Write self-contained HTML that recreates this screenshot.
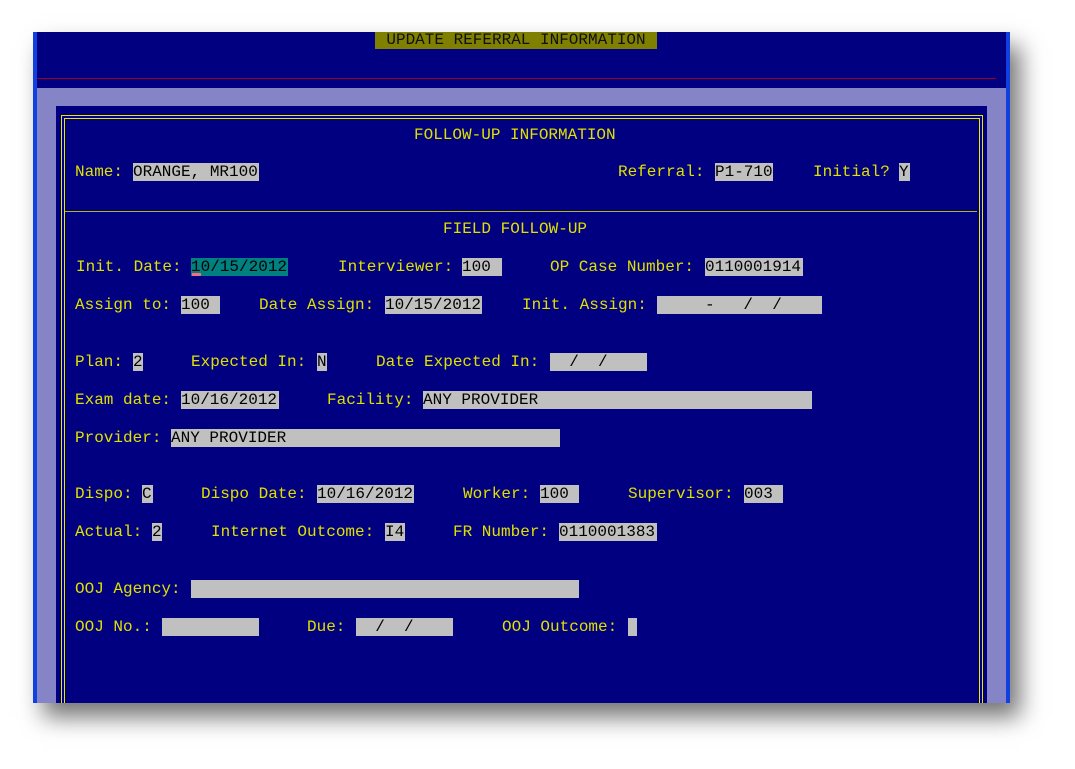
<!DOCTYPE html>
<html><head><meta charset="utf-8"><style>
body{margin:0;width:1075px;height:769px;background:#fff;position:relative;overflow:hidden;font-family:"Liberation Mono",monospace;font-size:16px;}
#win{position:absolute;left:33px;top:32px;width:977px;height:671px;background:#000080;box-shadow:10px 14px 22px rgba(0,0,0,0.55);overflow:hidden}
.abs{position:absolute}
.t{position:absolute;color:#e0e000;line-height:18px;white-space:pre;height:18px}
.f{position:absolute;background:#c0c0c0;color:#000;line-height:18px;height:18px;white-space:pre}
.stip{background:#8484c6}
</style></head><body>
<div id="win">
 <div class="abs" style="left:0;top:0;width:4px;height:671px;background:#1040e0"></div>
 <div class="abs" style="right:0;top:0;width:4px;height:671px;background:#1040e0"></div>
 <div class="abs" style="left:4px;top:46px;width:959px;height:1px;background:#a00020"></div>
 <div class="abs stip" style="left:4px;top:56px;width:969px;height:615px"></div>
 <div class="abs" style="left:23px;top:74px;width:931px;height:600px;background:#000080"></div>
 <div class="abs" style="left:28px;top:83px;width:920px;height:600px;border:1px solid #e8e800"></div>
 <div class="abs" style="left:31px;top:86px;width:914px;height:600px;border:1px solid #e8e800"></div>
 <div class="abs" style="left:32px;top:179px;width:912px;height:1px;background:#b8b800"></div>
 <div class="abs" style="left:342px;top:0;width:282px;height:17px;background:#808000;color:#101010;line-height:17px;text-align:center;white-space:pre">UPDATE REFERRAL INFORMATION</div>
</div>
<div class="t" style="left:414px;top:126px">FOLLOW-UP INFORMATION</div>
<div class="t" style="left:75px;top:163px">Name:</div><div class="f" style="left:133px;top:163px;width:126px">ORANGE, MR100</div>
<div class="t" style="left:618px;top:163px">Referral:</div><div class="f" style="left:715px;top:163px;width:58px">P1-710</div>
<div class="t" style="left:813px;top:163px">Initial?</div><div class="f" style="left:899px;top:163px;width:11px">Y</div>
<div class="t" style="left:443px;top:220px">FIELD FOLLOW-UP</div>
<div class="t" style="left:76px;top:258px">Init. Date:</div><div class="f" style="left:191px;top:258px;width:97px;background:#008080">10/15/2012</div>
<div class="abs" style="left:192px;top:273px;width:9px;height:3px;background:#f07080"></div>
<div class="t" style="left:338px;top:258px">Interviewer:</div><div class="f" style="left:462px;top:258px;width:40px">100</div>
<div class="t" style="left:550px;top:258px">OP Case Number:</div><div class="f" style="left:705px;top:258px;width:98px">0110001914</div>
<div class="t" style="left:75px;top:296px">Assign to:</div><div class="f" style="left:181px;top:296px;width:39px">100</div>
<div class="t" style="left:259px;top:296px">Date Assign:</div><div class="f" style="left:385px;top:296px;width:97px">10/15/2012</div>
<div class="t" style="left:522px;top:296px">Init. Assign:</div><div class="f" style="left:657px;top:296px;width:165px">     -   /  /</div>
<div class="t" style="left:75px;top:353px">Plan:</div><div class="f" style="left:133px;top:353px;width:10px">2</div>
<div class="t" style="left:191px;top:353px">Expected In:</div><div class="f" style="left:317px;top:353px;width:10px">N</div>
<div class="t" style="left:376px;top:353px">Date Expected In:</div><div class="f" style="left:550px;top:353px;width:97px">  /  /</div>
<div class="t" style="left:75px;top:391px">Exam date:</div><div class="f" style="left:181px;top:391px;width:98px">10/16/2012</div>
<div class="t" style="left:327px;top:391px">Facility:</div><div class="f" style="left:423px;top:391px;width:389px">ANY PROVIDER</div>
<div class="t" style="left:75px;top:429px">Provider:</div><div class="f" style="left:171px;top:429px;width:389px">ANY PROVIDER</div>
<div class="t" style="left:75px;top:485px">Dispo:</div><div class="f" style="left:142px;top:485px;width:11px">C</div>
<div class="t" style="left:201px;top:485px">Dispo Date:</div><div class="f" style="left:317px;top:485px;width:97px">10/16/2012</div>
<div class="t" style="left:463px;top:485px">Worker:</div><div class="f" style="left:540px;top:485px;width:39px">100</div>
<div class="t" style="left:628px;top:485px">Supervisor:</div><div class="f" style="left:744px;top:485px;width:39px">003</div>
<div class="t" style="left:75px;top:523px">Actual:</div><div class="f" style="left:152px;top:523px;width:10px">2</div>
<div class="t" style="left:211px;top:523px">Internet Outcome:</div><div class="f" style="left:385px;top:523px;width:20px">I4</div>
<div class="t" style="left:453px;top:523px">FR Number:</div><div class="f" style="left:559px;top:523px;width:98px">0110001383</div>
<div class="t" style="left:75px;top:580px">OOJ Agency:</div><div class="f" style="left:191px;top:580px;width:388px"></div>
<div class="t" style="left:75px;top:618px">OOJ No.:</div><div class="f" style="left:162px;top:618px;width:97px"></div>
<div class="t" style="left:307px;top:618px">Due:</div><div class="f" style="left:356px;top:618px;width:97px">  /  /</div>
<div class="t" style="left:502px;top:618px">OOJ Outcome:</div><div class="f" style="left:628px;top:618px;width:9px"></div>
</body></html>
